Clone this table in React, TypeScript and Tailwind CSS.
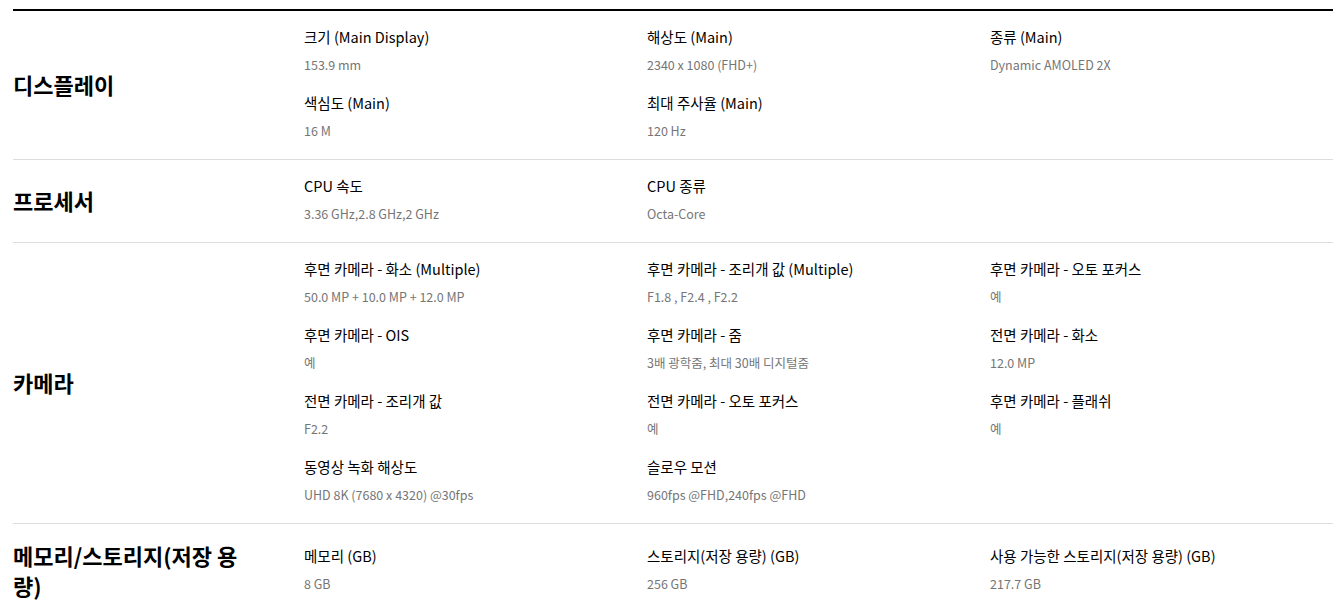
const sections: { title: string; items: [string, string][] }[] = [
  {
    title: "디스플레이",
    items: [
      ["크기 (Main Display)", "153.9 mm"],
      ["해상도 (Main)", "2340 x 1080 (FHD+)"],
      ["종류 (Main)", "Dynamic AMOLED 2X"],
      ["색심도 (Main)", "16 M"],
      ["최대 주사율 (Main)", "120 Hz"],
    ],
  },
  {
    title: "프로세서",
    items: [
      ["CPU 속도", "3.36 GHz,2.8 GHz,2 GHz"],
      ["CPU 종류", "Octa-Core"],
    ],
  },
  {
    title: "카메라",
    items: [
      ["후면 카메라 - 화소 (Multiple)", "50.0 MP + 10.0 MP + 12.0 MP"],
      ["후면 카메라 - 조리개 값 (Multiple)", "F1.8 , F2.4 , F2.2"],
      ["후면 카메라 - 오토 포커스", "예"],
      ["후면 카메라 - OIS", "예"],
      ["후면 카메라 - 줌", "3배 광학줌, 최대 30배 디지털줌"],
      ["전면 카메라 - 화소", "12.0 MP"],
      ["전면 카메라 - 조리개 값", "F2.2"],
      ["전면 카메라 - 오토 포커스", "예"],
      ["후면 카메라 - 플래쉬", "예"],
      ["동영상 녹화 해상도", "UHD 8K (7680 x 4320) @30fps"],
      ["슬로우 모션", "960fps @FHD,240fps @FHD"],
    ],
  },
  {
    title: "메모리/스토리지(저장 용량)",
    items: [
      ["메모리 (GB)", "8 GB"],
      ["스토리지(저장 용량) (GB)", "256 GB"],
      ["사용 가능한 스토리지(저장 용량) (GB)", "217.7 GB"],
    ],
  },
];

export default function App() {
  return (
    <div
      className="min-h-screen bg-white pt-[9px] pl-[13px]"
      style={{ fontFamily: '"Noto Sans CJK KR", "Noto Sans", sans-serif' }}
    >
      <div className="w-[1320px] border-t-2 border-black">
        {sections.map((section, i) => (
          <div
            key={section.title}
            className={`grid grid-cols-[291px_1fr] items-center pt-4 pb-[18px] ${
              i < sections.length - 1 ? "border-b border-[#dddddd]" : ""
            }`}
          >
            <h2 className="pr-12 text-[22px] leading-[30px] font-bold text-black">
              {section.title}
            </h2>
            <div className="grid grid-cols-3 gap-y-[18px]">
              {section.items.map(([label, value]) => (
                <div key={label} className="flex flex-col gap-2">
                  <p className="text-[14.5px] leading-5 text-black">{label}</p>
                  <p className="text-[12.5px] leading-5 text-[#767676]">{value}</p>
                </div>
              ))}
            </div>
          </div>
        ))}
      </div>
    </div>
  );
}
